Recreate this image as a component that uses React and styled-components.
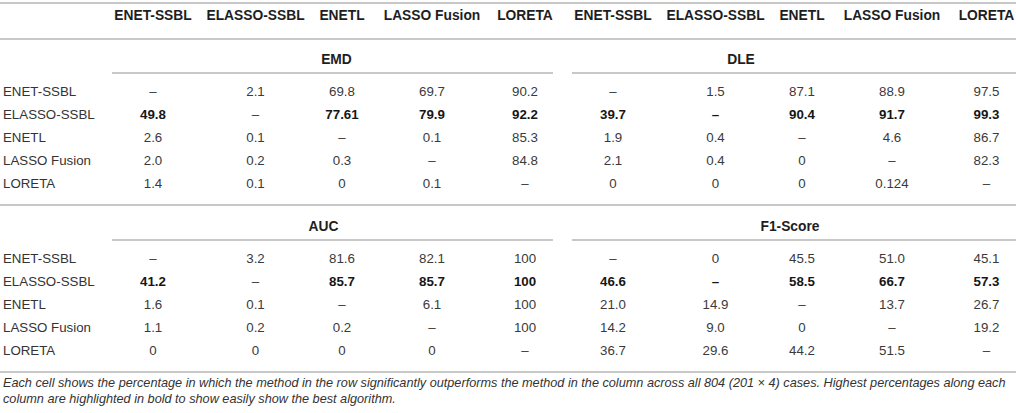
import React from "react";
import styled, { createGlobalStyle } from "styled-components";

const GlobalStyle = createGlobalStyle`
  body {
    margin: 0;
    background: #ffffff;
    font-family: "Liberation Sans", Arial, sans-serif;
  }
`;

const COLUMNS =
  "112px 82px 123px 50px 130px 56px 19px 82px 123px 50px 130px 59px";

const METHODS = ["ENET-SSBL", "ELASSO-SSBL", "ENETL", "LASSO Fusion", "LORETA"];

// "*" marks a bold (best) value
const BLOCKS = [
  {
    left: { title: "EMD", shift: 8 },
    right: { title: "DLE", shift: -106 },
    rows: [
      ["–", "2.1", "69.8", "69.7", "90.2", "–", "1.5", "87.1", "88.9", "97.5"],
      ["*49.8", "–", "*77.61", "*79.9", "*92.2", "*39.7", "*–", "*90.4", "*91.7", "*99.3"],
      ["2.6", "0.1", "–", "0.1", "85.3", "1.9", "0.4", "–", "4.6", "86.7"],
      ["2.0", "0.2", "0.3", "–", "84.8", "2.1", "0.4", "0", "–", "82.3"],
      ["1.4", "0.1", "0", "0.1", "–", "0", "0", "0", "0.124", "–"],
    ],
  },
  {
    left: { title: "AUC", shift: -18 },
    right: { title: "F1-Score", shift: -8 },
    rows: [
      ["–", "3.2", "81.6", "82.1", "100", "–", "0", "45.5", "51.0", "45.1"],
      ["*41.2", "–", "*85.7", "*85.7", "*100", "*46.6", "*–", "*58.5", "*66.7", "*57.3"],
      ["1.6", "0.1", "–", "6.1", "100", "21.0", "14.9", "–", "13.7", "26.7"],
      ["1.1", "0.2", "0.2", "–", "100", "14.2", "9.0", "0", "–", "19.2"],
      ["0", "0", "0", "0", "–", "36.7", "29.6", "44.2", "51.5", "–"],
    ],
  },
];

const Table = styled.div`
  width: 1016px;
  padding-top: 2px;
  color: #333333;
  font-size: 13.3px;
`;

const HeaderRow = styled.div`
  display: grid;
  grid-template-columns: ${COLUMNS};
  border-top: 2px solid #c8c8c8;
  border-bottom: 2px solid #c8c8c8;
  padding: 4px 0 14px;
  line-height: 16px;
`;

const HeadCell = styled.div`
  display: flex;
  justify-content: center;
  white-space: nowrap;
  font-size: 13.8px;
  font-weight: bold;
  color: #1e1e1e;
`;

const Block = styled.div`
  border-bottom: 2px solid #c8c8c8;
  padding-bottom: 9px;
`;

const TitleRow = styled.div`
  display: grid;
  grid-template-columns: ${COLUMNS};
  line-height: 16px;
`;

const Title = styled.div`
  grid-column: ${(p) => p.$span};
  display: flex;
  justify-content: center;
  padding: ${(p) => p.$top}px 0 4px;
  padding-left: ${(p) => Math.max(p.$shift, 0)}px;
  padding-right: ${(p) => Math.max(-p.$shift, 0)}px;
  border-bottom: 2px solid #c8c8c8;
  font-size: 13.8px;
  font-weight: bold;
  color: #1e1e1e;
`;

const Rows = styled.div`
  padding-top: 6px;
`;

const DataRow = styled.div`
  display: grid;
  grid-template-columns: ${COLUMNS};
  height: 23px;
  line-height: 23px;
`;

const Label = styled.div`
  padding-left: 3px;
  white-space: nowrap;
`;

const Cell = styled.div`
  display: flex;
  justify-content: center;
  white-space: nowrap;
  font-weight: ${(p) => (p.$bold ? "bold" : "normal")};
  color: ${(p) => (p.$bold ? "#161616" : "#3a3a3a")};
`;

const Caption = styled.p`
  margin: 0;
  padding: 2px 0 0 3px;
  font-size: 12.7px;
  line-height: 16px;
  font-style: italic;
  color: #333333;
  white-space: nowrap;
`;

function renderValue(v, i) {
  const bold = v.startsWith("*");
  return (
    <Cell key={i} $bold={bold}>
      {bold ? v.slice(1) : v}
    </Cell>
  );
}

export default function App() {
  return (
    <>
      <GlobalStyle />
      <Table>
        <HeaderRow>
          <div />
          {METHODS.map((m) => (
            <HeadCell key={"a" + m}>{m}</HeadCell>
          ))}
          <div />
          {METHODS.map((m) => (
            <HeadCell key={"b" + m}>{m}</HeadCell>
          ))}
        </HeaderRow>

        {BLOCKS.map((block, b) => (
          <Block key={b}>
            <TitleRow>
              <Title $span="2 / 7" $shift={block.left.shift} $top={b === 0 ? 12 : 13}>
                {block.left.title}
              </Title>
              <Title $span="8 / 13" $shift={block.right.shift} $top={b === 0 ? 12 : 13}>
                {block.right.title}
              </Title>
            </TitleRow>
            <Rows>
              {block.rows.map((row, r) => (
                <DataRow key={r}>
                  <Label>{METHODS[r]}</Label>
                  {row.slice(0, 5).map(renderValue)}
                  <div />
                  {row.slice(5).map((v, i) => renderValue(v, i + 5))}
                </DataRow>
              ))}
            </Rows>
          </Block>
        ))}

        <Caption>
          Each cell shows the percentage in which the method in the row significantly
          outperforms the method in the column across all 804 (201 × 4) cases. Highest
          percentages along each
          <br />
          column are highlighted in bold to show easily show the best algorithm.
        </Caption>
      </Table>
    </>
  );
}
